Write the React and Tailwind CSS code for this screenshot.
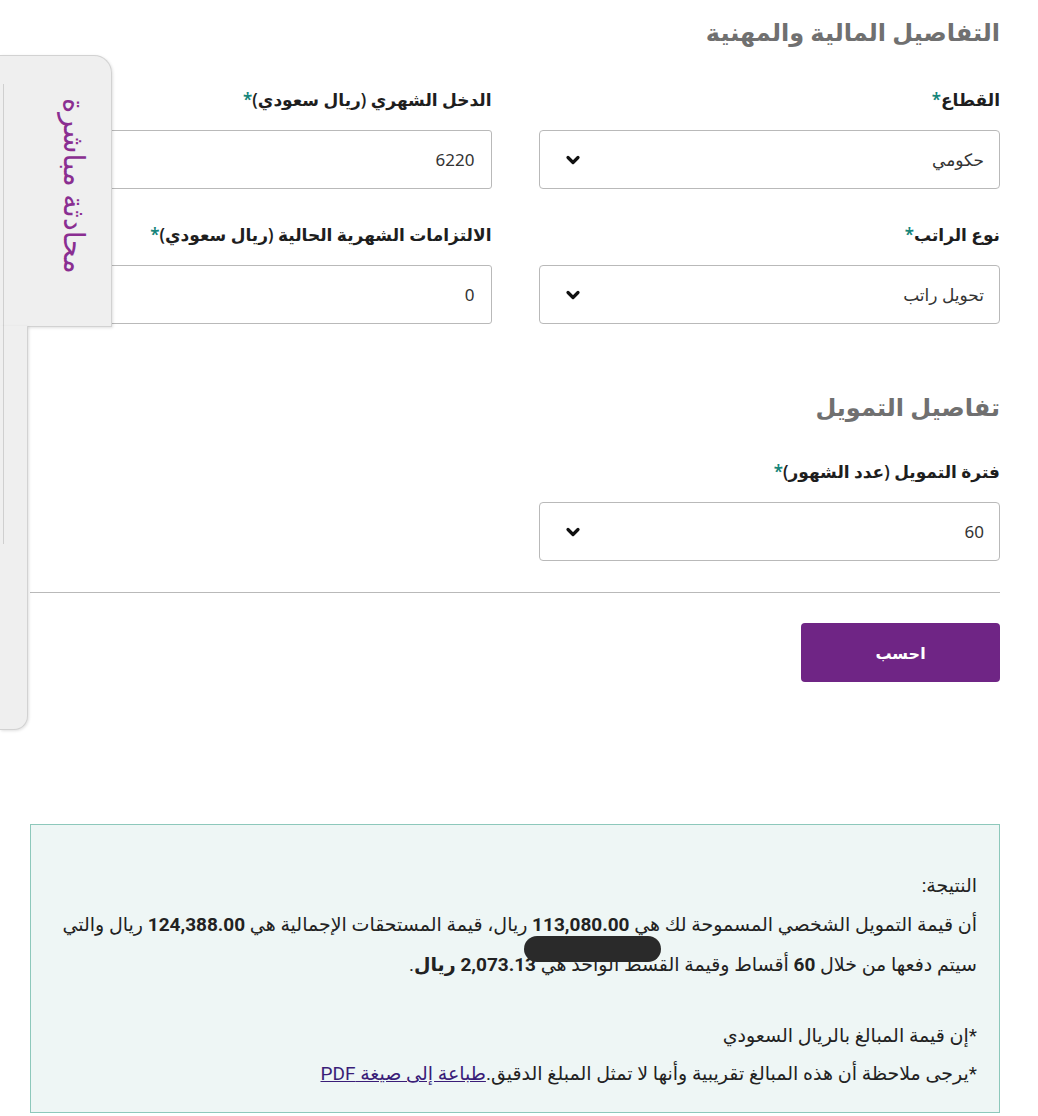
const Star = () => <span className="text-[#16857a]">*</span>

const Chevron = () => (
    <svg viewBox="0 0 16 16" className="w-[16px] h-[16px]" fill="none" stroke="#111" strokeWidth="3.2" strokeLinecap="round" strokeLinejoin="round">
        <polyline points="3,5.5 8,10.5 13,5.5" />
    </svg>
)

const SelectBox = ({ value }) => (
    <div className="h-[59px] flex items-center justify-between border border-[#b9b9b9] rounded-[4px] bg-white pr-[15px] pl-[25px]">
        <span className="text-[17px] text-[#333]">{value}</span>
        <Chevron />
    </div>
)

const InputBox = ({ value }) => (
    <div className="h-[59px] flex items-center border border-[#b9b9b9] rounded-[3px] bg-white pr-[16px]">
        <span className="text-[17px] text-[#333]">{value}</span>
    </div>
)

const Field = ({ label, children, className = "" }) => (
    <div className={className}>
        <label className="block text-[17px] leading-[26px] font-semibold text-[#1e1e1e]">{label}<Star /></label>
        <div className="mt-[17px]">{children}</div>
    </div>
)

const ChatTab = () => (
    <div dir="ltr" className="absolute left-0 top-[55px] flex flex-col items-start">
        <div className="relative w-[112px] h-[272px] bg-[#efefef] border-t border-r border-b border-[#d2d2d2] rounded-tr-[18px] shadow-[1px_1px_3px_rgba(0,0,0,0.12)] flex items-center justify-center">
            <span className="absolute left-[3px] top-[28px] w-[1px] h-[244px] bg-[#cfcfcf]" />
            <span dir="rtl" className="block rotate-90 whitespace-nowrap text-[29px] leading-[30px] font-medium text-[#8a2e91] ml-[38px] mt-[-10px]">محادثة مباشرة</span>
        </div>
        <div className="relative w-[28px] h-[404px] -mt-[1px] bg-[#efefef] border-r border-b border-[#d2d2d2] rounded-br-[14px] shadow-[1px_1px_3px_rgba(0,0,0,0.12)]">
            <span className="absolute left-[3px] top-0 w-[1px] h-[218px] bg-[#cfcfcf]" />
        </div>
    </div>
)

const App = () => {
    return (
        <div dir="rtl" className="relative min-h-[1116px] bg-white font-['Noto_Sans','DejaVu_Sans',sans-serif] pr-[38px] pl-[30px] pt-[14px] overflow-hidden">
            <h2 className="text-[24px] leading-[36px] font-bold text-[#707070]">التفاصيل المالية والمهنية</h2>

            <div className="grid grid-cols-2 gap-x-[47px] mt-[37px]">
                <Field label="القطاع">
                    <SelectBox value="حكومي" />
                </Field>
                <Field label="الدخل الشهري (ريال سعودي)">
                    <InputBox value="6220" />
                </Field>
                <Field label="نوع الراتب" className="mt-[33px]">
                    <SelectBox value="تحويل راتب" />
                </Field>
                <Field label="الالتزامات الشهرية الحالية (ريال سعودي)" className="mt-[33px]">
                    <InputBox value="0" />
                </Field>
            </div>

            <h2 className="text-[24px] leading-[36px] font-bold text-[#707070] mt-[65px]">تفاصيل التمويل</h2>

            <div className="grid grid-cols-2 gap-x-[47px] mt-[34px]">
                <Field label="فترة التمويل (عدد الشهور)">
                    <SelectBox value="60" />
                </Field>
            </div>

            <hr className="mt-[31px] border-t border-[#b9b9b9]" />

            <button className="mt-[30px] w-[199px] h-[59px] rounded-[4px] bg-[#6f2585] text-white text-[16px] font-semibold">احسب</button>

            <div className="relative mt-[142px] h-[289px] border border-[#8dc8bb] bg-[#eef6f5] pt-[42px] pr-[22px] pl-[10px] text-[19px] text-[#222] font-['Roboto','DejaVu_Sans',sans-serif]">
                <p className="leading-[38px]">النتيجة:</p>
                <p className="leading-[40px]">
                    أن قيمة التمويل الشخصي المسموحة لك هي <b>113,080.00</b> ريال، قيمة المستحقات الإجمالية هي <b>124,388.00</b> ريال والتي سيتم دفعها من خلال <b>60</b> أقساط وقيمة القسط الواحد هي <b>2,073.13 ريال</b>.
                </p>
                <p className="leading-[38px] mt-[32px]">*إن قيمة المبالغ بالريال السعودي</p>
                <p className="leading-[38px]">
                    *يرجى ملاحظة أن هذه المبالغ تقريبية وأنها لا تمثل المبلغ الدقيق.<a href="#" className="underline text-[#3a1d78]">طباعة إلى صيغة PDF</a>
                </p>
                <span className="absolute left-[493px] top-[111px] w-[137px] h-[26px] rounded-full bg-[#2a2a2a]" />
            </div>

            <ChatTab />
        </div>
    )
}

export default App
